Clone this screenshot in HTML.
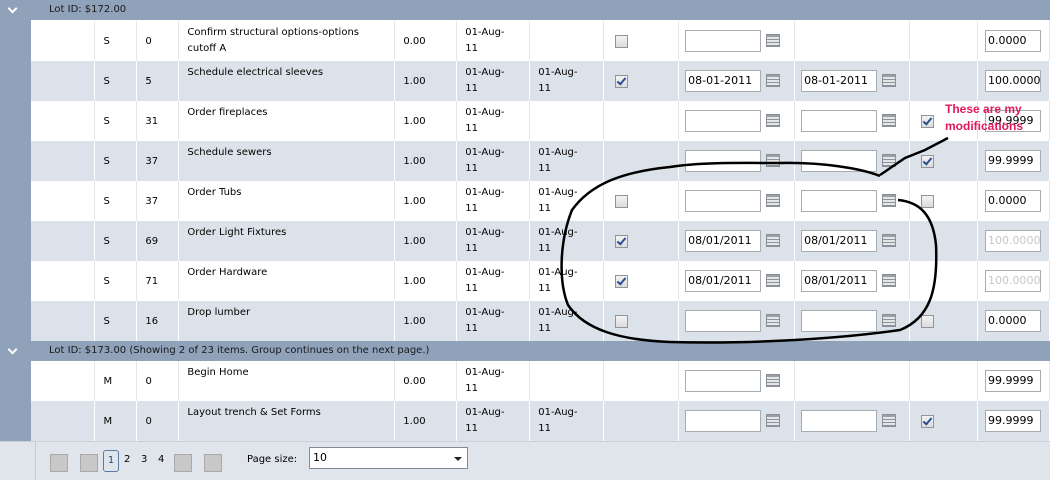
<!DOCTYPE html><html><head><meta charset="utf-8"><style>
body{margin:0;width:1050px;height:479px;overflow:hidden;background:#fff;font-family:"DejaVu Sans","Liberation Sans",sans-serif;font-size:10px;color:#000;position:relative}
.side{position:absolute;left:0;top:0;width:31px;height:441px;background:#8fa2ba}
.gh{position:absolute;left:0;width:1050px;height:20px;background:#8fa2ba;color:#1a1a1a;line-height:20px}
.gh span{position:absolute;left:49px}
.gh i{position:absolute;left:9px;top:5px;width:5px;height:5px;border-right:2px solid #fff;border-bottom:2px solid #fff;transform:rotate(45deg)}
table{position:absolute;left:31px;border-collapse:collapse;table-layout:fixed}
tr{height:40px}
td{height:40px;box-sizing:border-box;padding:0;border-right:1px solid #e3e7ec;position:relative;vertical-align:middle;overflow:hidden}
tr.g td{background:#dce2e9;border-right-color:#fff}tr.w td{background:#fff}
.t{vertical-align:top;padding:4px 8px 0 8px;line-height:16px}
.c{padding-left:8px}
.d{vertical-align:top;padding:4px 0 0 8px;line-height:16px}
.in{position:absolute;left:6px;top:9px;width:72px;height:20px;border:1px solid #a5acb2;background:#fff;font-size:11px;line-height:20px;padding-left:2px;box-sizing:content-box}
.cal{position:absolute;left:87px;top:13px;width:12px;height:11px;border:1px solid #8a8f96;background:linear-gradient(#9aa0a8 0 2px,transparent 2px),repeating-linear-gradient(0deg,#8d939a 0 1px,#e4e6e8 1px 3px),#ddd}
.cb{position:absolute;left:11px;top:14px;width:11px;height:11px;border:1px solid #8f959c;background:linear-gradient(#f3f3f3,#dcdcdc)}
.cb.k::after{content:"";position:absolute;left:3px;top:0px;width:3px;height:7px;border-right:2px solid #2c4d8f;border-bottom:2px solid #2c4d8f;transform:rotate(40deg)}
.v{position:absolute;left:7px;top:9px;width:52px;height:20px;border:1px solid #a5acb2;background:#fff;font-size:11px;line-height:20px;padding-left:2px}
.v.dis{color:#c8c8c8}
.pager{position:absolute;left:0;top:441px;width:1050px;height:38px;background:#e0e5eb;border-top:1px solid #c9d0d8}
.pager .l{position:absolute;left:35px;top:0;width:1px;height:38px;background:#c5ccd4}
.sq{position:absolute;top:12px;width:16px;height:16px;background:#c8c8c8;border:1px solid #a9a9a9}
</style></head><body>
<div class="side"></div>
<div class="gh" style="top:0"><i></i><span>Lot ID: $172.00</span></div>
<table style="top:21px">
<colgroup><col width="64"><col width="42"><col width="42"><col width="216"><col width="62"><col width="73"><col width="74"><col width="75"><col width="116"><col width="115"><col width="68"><col width="72"></colgroup>
<tr class="w"><td></td><td class="c">S</td><td class="c">0</td><td class="t">Confirm structural options-options cutoff A</td><td class="c">0.00</td><td class="d">01-Aug-<br>11</td><td></td><td><div class="cb"></div></td><td><div class="in"></div><div class="cal"></div></td><td></td><td></td><td><div class="v">0.0000</div></td></tr>
<tr class="g"><td></td><td class="c">S</td><td class="c">5</td><td class="t">Schedule electrical sleeves</td><td class="c">1.00</td><td class="d">01-Aug-<br>11</td><td class="d">01-Aug-<br>11</td><td><div class="cb k"></div></td><td><div class="in">08-01-2011</div><div class="cal"></div></td><td><div class="in">08-01-2011</div><div class="cal"></div></td><td></td><td><div class="v">100.0000</div></td></tr>
<tr class="w"><td></td><td class="c">S</td><td class="c">31</td><td class="t">Order fireplaces</td><td class="c">1.00</td><td class="d">01-Aug-<br>11</td><td></td><td></td><td><div class="in"></div><div class="cal"></div></td><td><div class="in"></div><div class="cal"></div></td><td><div class="cb k"></div></td><td><div class="v">99.9999</div></td></tr>
<tr class="g"><td></td><td class="c">S</td><td class="c">37</td><td class="t">Schedule sewers</td><td class="c">1.00</td><td class="d">01-Aug-<br>11</td><td class="d">01-Aug-<br>11</td><td></td><td><div class="in"></div><div class="cal"></div></td><td><div class="in"></div><div class="cal"></div></td><td><div class="cb k"></div></td><td><div class="v">99.9999</div></td></tr>
<tr class="w"><td></td><td class="c">S</td><td class="c">37</td><td class="t">Order Tubs</td><td class="c">1.00</td><td class="d">01-Aug-<br>11</td><td class="d">01-Aug-<br>11</td><td><div class="cb"></div></td><td><div class="in"></div><div class="cal"></div></td><td><div class="in"></div><div class="cal"></div></td><td><div class="cb"></div></td><td><div class="v">0.0000</div></td></tr>
<tr class="g"><td></td><td class="c">S</td><td class="c">69</td><td class="t">Order Light Fixtures</td><td class="c">1.00</td><td class="d">01-Aug-<br>11</td><td class="d">01-Aug-<br>11</td><td><div class="cb k"></div></td><td><div class="in">08/01/2011</div><div class="cal"></div></td><td><div class="in">08/01/2011</div><div class="cal"></div></td><td></td><td><div class="v dis">100.0000</div></td></tr>
<tr class="w"><td></td><td class="c">S</td><td class="c">71</td><td class="t">Order Hardware</td><td class="c">1.00</td><td class="d">01-Aug-<br>11</td><td class="d">01-Aug-<br>11</td><td><div class="cb k"></div></td><td><div class="in">08/01/2011</div><div class="cal"></div></td><td><div class="in">08/01/2011</div><div class="cal"></div></td><td></td><td><div class="v dis">100.0000</div></td></tr>
<tr class="g"><td></td><td class="c">S</td><td class="c">16</td><td class="t">Drop lumber</td><td class="c">1.00</td><td class="d">01-Aug-<br>11</td><td class="d">01-Aug-<br>11</td><td><div class="cb"></div></td><td><div class="in"></div><div class="cal"></div></td><td><div class="in"></div><div class="cal"></div></td><td><div class="cb"></div></td><td><div class="v">0.0000</div></td></tr>
</table>
<div class="gh" style="top:341px"><i></i><span>Lot ID: $173.00 (Showing 2 of 23 items. Group continues on the next page.)</span></div>
<table style="top:361px">
<colgroup><col width="64"><col width="42"><col width="42"><col width="216"><col width="62"><col width="73"><col width="74"><col width="75"><col width="116"><col width="115"><col width="68"><col width="72"></colgroup>
<tr class="w"><td></td><td class="c">M</td><td class="c">0</td><td class="t">Begin Home</td><td class="c">0.00</td><td class="d">01-Aug-<br>11</td><td></td><td></td><td><div class="in"></div><div class="cal"></div></td><td></td><td></td><td><div class="v">99.9999</div></td></tr>
<tr class="g"><td></td><td class="c">M</td><td class="c">0</td><td class="t">Layout trench &amp; Set Forms</td><td class="c">1.00</td><td class="d">01-Aug-<br>11</td><td class="d">01-Aug-<br>11</td><td></td><td><div class="in"></div><div class="cal"></div></td><td><div class="in"></div><div class="cal"></div></td><td><div class="cb k"></div></td><td><div class="v">99.9999</div></td></tr>
</table>
<div class="pager"><div class="l"></div>
<div class="sq" style="left:50px"></div><div class="sq" style="left:80px"></div>
<div style="position:absolute;left:103px;top:8px;width:14px;height:20px;border:1px solid #5c7aa6;border-radius:3px;text-align:center;line-height:20px;color:#2a4a7a">1</div>
<div style="position:absolute;left:124px;top:8px;line-height:20px">2</div>
<div style="position:absolute;left:141px;top:8px;line-height:20px">3</div>
<div style="position:absolute;left:158px;top:8px;line-height:20px">4</div>
<div class="sq" style="left:174px"></div><div class="sq" style="left:204px"></div>
<div style="position:absolute;left:247px;top:8px;line-height:20px">Page size:</div>
<div style="position:absolute;left:309px;top:5px;width:159px;height:22px;border:1px solid #7f8a98;background:#fff;font-size:11px;line-height:20px;padding-left:3px;box-sizing:border-box">10<span style="position:absolute;right:5px;top:9px;border-left:4px solid transparent;border-right:4px solid transparent;border-top:4px solid #222"></span></div>
</div>
<svg style="position:absolute;left:0;top:0" width="1050" height="479"><path d="M880,176 C860,168 820,162 780,163 C740,163 700,162 670,167 C620,172 590,185 572,210 C560,240 558,280 568,305 C585,330 620,340 670,342 C740,344 830,340 900,330 C930,318 938,290 936,245 C933,215 920,202 898,200" fill="none" stroke="#000" stroke-width="2.5"/><path d="M880,175 L905,158 L925,150 L948,138" fill="none" stroke="#000" stroke-width="2.5"/></svg>
<div style="position:absolute;left:945px;top:101px;color:#e2185a;font-weight:bold;font-size:12px;line-height:17px;font-family:'Liberation Sans',sans-serif">These are my<br>modifications</div>
</body></html>
